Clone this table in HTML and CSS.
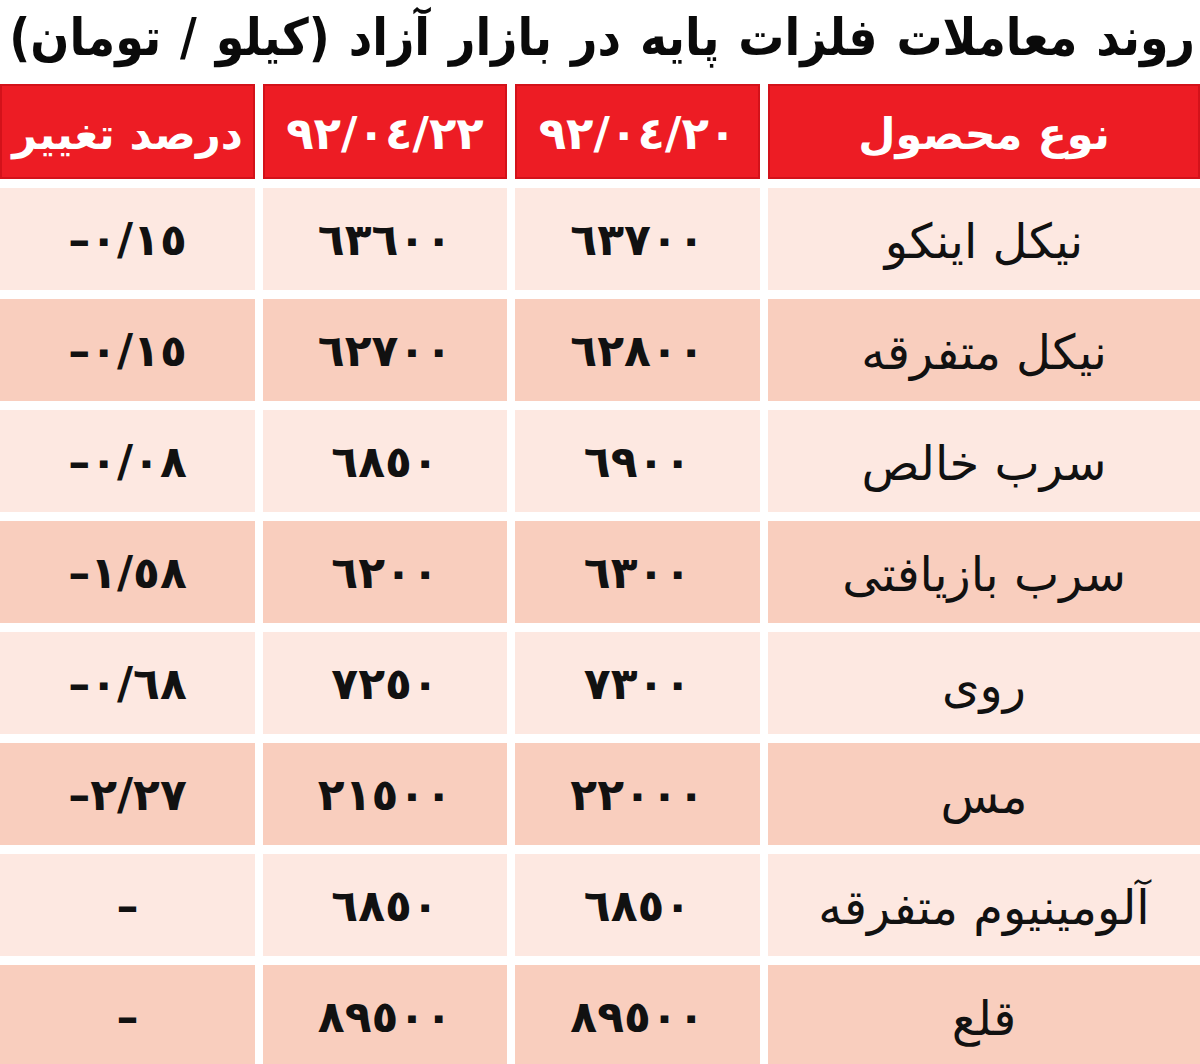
FILE: index.html
```html
<!DOCTYPE html>
<html lang="fa" dir="rtl">
<head>
<meta charset="utf-8">
<title>روند معاملات فلزات پایه</title>
<link rel="stylesheet" href="styles.css">
</head>
<body>
<div class="page">
  <h1 class="title">روند معاملات فلزات پایه در بازار آزاد (کیلو / تومان)</h1>
  <div class="table">
    <div class="cell head">نوع محصول</div>
    <div class="cell head num">٩٢/٠٤/٢٠</div>
    <div class="cell head num">٩٢/٠٤/٢٢</div>
    <div class="cell head">درصد تغییر</div>

    <div class="cell light name">نیکل اینکو</div>
    <div class="cell light num">٦٣٧٠٠</div>
    <div class="cell light num">٦٣٦٠٠</div>
    <div class="cell light num">–٠/١٥</div>

    <div class="cell dark name">نیکل متفرقه</div>
    <div class="cell dark num">٦٢٨٠٠</div>
    <div class="cell dark num">٦٢٧٠٠</div>
    <div class="cell dark num">–٠/١٥</div>

    <div class="cell light name">سرب خالص</div>
    <div class="cell light num">٦٩٠٠</div>
    <div class="cell light num">٦٨٥٠</div>
    <div class="cell light num">–٠/٠٨</div>

    <div class="cell dark name">سرب بازیافتی</div>
    <div class="cell dark num">٦٣٠٠</div>
    <div class="cell dark num">٦٢٠٠</div>
    <div class="cell dark num">–١/٥٨</div>

    <div class="cell light name">روی</div>
    <div class="cell light num">٧٣٠٠</div>
    <div class="cell light num">٧٢٥٠</div>
    <div class="cell light num">–٠/٦٨</div>

    <div class="cell dark name">مس</div>
    <div class="cell dark num">٢٢٠٠٠</div>
    <div class="cell dark num">٢١٥٠٠</div>
    <div class="cell dark num">–٢/٢٧</div>

    <div class="cell light name">آلومینیوم متفرقه</div>
    <div class="cell light num">٦٨٥٠</div>
    <div class="cell light num">٦٨٥٠</div>
    <div class="cell light num">–</div>

    <div class="cell dark name">قلع</div>
    <div class="cell dark num">٨٩٥٠٠</div>
    <div class="cell dark num">٨٩٥٠٠</div>
    <div class="cell dark num">–</div>
  </div>
</div>
</body>
</html>
```

FILE: styles.css
```css
html, body {
  margin: 0;
  padding: 0;
  background: #ffffff;
}

.page {
  width: 1200px;
  height: 1064px;
  overflow: hidden;
  font-family: "DejaVu Sans", "Noto Sans", sans-serif;
  color: #111;
}

.title {
  margin: 0;
  height: 84px;
  padding: 0 5px 0 0;
  box-sizing: border-box;
  font-family: "DejaVu Sans Condensed", "DejaVu Sans", sans-serif;
  font-weight: bold;
  font-size: 51px;
  word-spacing: 3px;
  line-height: 76px;
  white-space: nowrap;
  text-align: right;
  color: #0a0a0a;
}

.table {
  display: grid;
  grid-template-columns: 432px 245px 244px 255px;
  grid-template-rows: 95px repeat(8, 102px);
  gap: 9px 8px;
}

.cell {
  display: flex;
  align-items: center;
  justify-content: center;
  font-size: 44px;
  white-space: nowrap;
}

.head {
  background: #ed1c24;
  box-shadow: inset 0 0 0 2px #d3121a;
  color: #ffffff;
  font-weight: bold;
  font-size: 43px;
  padding-top: 4px;
  box-sizing: border-box;
}

.head.num {
  font-size: 45px;
}

.num {
  direction: ltr;
  font-weight: bold;
}

.name {
  font-size: 48px;
  padding-top: 4px;
  box-sizing: border-box;
}

.light {
  background: #fde8e1;
}

.dark {
  background: #f9cebe;
}
```
